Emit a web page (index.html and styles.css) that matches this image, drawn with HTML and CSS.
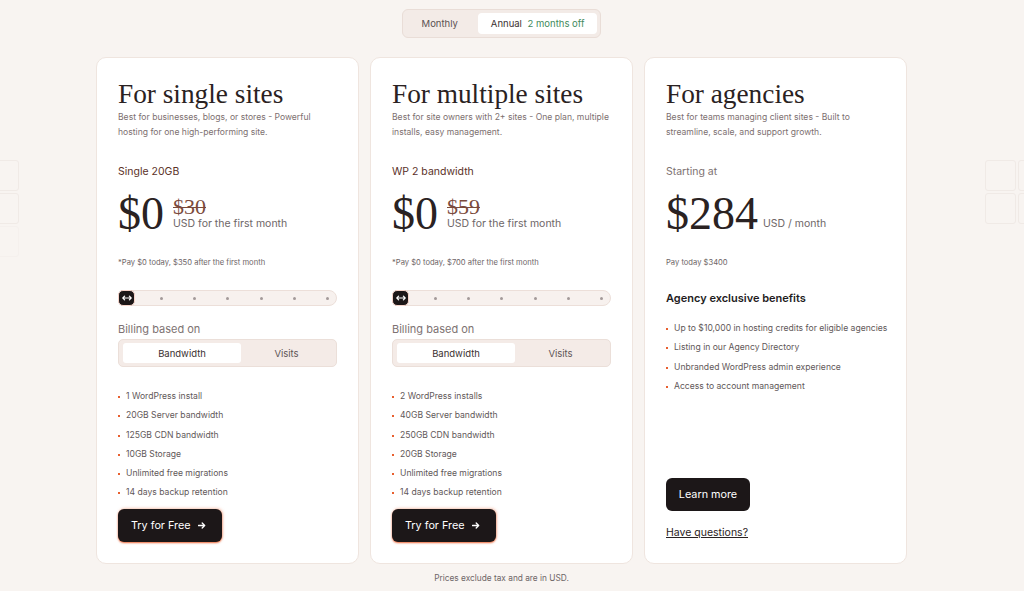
FILE: index.html
```html
<!DOCTYPE html>
<html lang="en">
<head>
    <meta charset="UTF-8">
    <meta name="viewport" content="width=device-width, initial-scale=1.0">
    <title>Pricing</title>
    <link rel="stylesheet" href="styles.css">
</head>
<body>
    <!-- faint background tiles -->
    <div class="tiles tiles-left">
        <span class="tile"></span>
        <span class="tile"></span>
        <span class="tile tile-fade"></span>
    </div>
    <div class="tiles tiles-right">
        <span class="tile"></span>
        <span class="tile"></span>
        <span class="tile"></span>
        <span class="tile"></span>
    </div>

    <main class="page">
        <div class="period-toggle">
            <button class="period">Monthly</button>
            <button class="period active">Annual <span class="save">2 months off</span></button>
        </div>

        <section class="plans">
            <!-- Single site -->
            <article class="card">
                <h2 class="card-title">For single sites</h2>
                <p class="card-desc">Best for businesses, blogs, or stores - Powerful hosting for one high-performing site.</p>
                <div class="plan-name">Single 20GB</div>
                <div class="price-row">
                    <span class="price">$0</span>
                    <div class="price-side">
                        <span class="old-price">$30</span>
                        <span class="price-unit">USD for the first month</span>
                    </div>
                </div>
                <p class="price-note">*Pay $0 today, $350 after the first month</p>
                <div class="slider">
                    <span class="thumb">
                        <svg width="10" height="6" viewBox="0 0 10 6"><path d="M1 3h8M2.6 1.2L0.8 3l1.8 1.8M7.4 1.2L9.2 3 7.4 4.8" fill="none" stroke="#fff" stroke-width="1.2" stroke-linecap="round" stroke-linejoin="round"/></svg>
                    </span>
                    <span class="dot"></span><span class="dot"></span><span class="dot"></span>
                    <span class="dot"></span><span class="dot"></span><span class="dot"></span>
                </div>
                <div class="billing-label">Billing based on</div>
                <div class="segment">
                    <span class="seg active">Bandwidth</span>
                    <span class="seg">Visits</span>
                </div>
                <ul class="features">
                    <li>1 WordPress install</li>
                    <li>20GB Server bandwidth</li>
                    <li>125GB CDN bandwidth</li>
                    <li>10GB Storage</li>
                    <li>Unlimited free migrations</li>
                    <li>14 days backup retention</li>
                </ul>
                <button class="btn btn-glow">Try for Free
                    <svg width="8" height="7" viewBox="0 0 8 7"><path d="M0.5 3.5h6.2M4.2 1l2.5 2.5L4.2 6" fill="none" stroke="#fff" stroke-width="1.3" stroke-linecap="round" stroke-linejoin="round"/></svg>
                </button>
            </article>

            <!-- Multiple sites -->
            <article class="card">
                <h2 class="card-title">For multiple sites</h2>
                <p class="card-desc">Best for site owners with 2+ sites - One plan, multiple installs, easy management.</p>
                <div class="plan-name">WP 2 bandwidth</div>
                <div class="price-row">
                    <span class="price">$0</span>
                    <div class="price-side">
                        <span class="old-price">$59</span>
                        <span class="price-unit">USD for the first month</span>
                    </div>
                </div>
                <p class="price-note">*Pay $0 today, $700 after the first month</p>
                <div class="slider">
                    <span class="thumb">
                        <svg width="10" height="6" viewBox="0 0 10 6"><path d="M1 3h8M2.6 1.2L0.8 3l1.8 1.8M7.4 1.2L9.2 3 7.4 4.8" fill="none" stroke="#fff" stroke-width="1.2" stroke-linecap="round" stroke-linejoin="round"/></svg>
                    </span>
                    <span class="dot"></span><span class="dot"></span><span class="dot"></span>
                    <span class="dot"></span><span class="dot"></span><span class="dot"></span>
                </div>
                <div class="billing-label">Billing based on</div>
                <div class="segment">
                    <span class="seg active">Bandwidth</span>
                    <span class="seg">Visits</span>
                </div>
                <ul class="features">
                    <li>2 WordPress installs</li>
                    <li>40GB Server bandwidth</li>
                    <li>250GB CDN bandwidth</li>
                    <li>20GB Storage</li>
                    <li>Unlimited free migrations</li>
                    <li>14 days backup retention</li>
                </ul>
                <button class="btn btn-glow">Try for Free
                    <svg width="8" height="7" viewBox="0 0 8 7"><path d="M0.5 3.5h6.2M4.2 1l2.5 2.5L4.2 6" fill="none" stroke="#fff" stroke-width="1.3" stroke-linecap="round" stroke-linejoin="round"/></svg>
                </button>
            </article>

            <!-- Agencies -->
            <article class="card">
                <h2 class="card-title">For agencies</h2>
                <p class="card-desc">Best for teams managing client sites - Built to streamline, scale, and support growth.</p>
                <div class="plan-name muted">Starting at</div>
                <div class="price-row">
                    <span class="price">$284</span>
                    <div class="price-side price-side-tight">
                        <span class="price-unit">USD / month</span>
                    </div>
                </div>
                <p class="price-note">Pay today $3400</p>
                <h3 class="benefits-title">Agency exclusive benefits</h3>
                <ul class="features benefits">
                    <li>Up to $10,000 in hosting credits for eligible agencies</li>
                    <li>Listing in our Agency Directory</li>
                    <li>Unbranded WordPress admin experience</li>
                    <li>Access to account management</li>
                </ul>
                <div class="agency-actions">
                    <button class="btn btn-learn">Learn more</button>
                    <a class="questions" href="#">Have questions?</a>
                </div>
            </article>
        </section>

        <p class="footnote">Prices exclude tax and are in USD.</p>
    </main>
</body>
</html>
```

FILE: styles.css
```css
* {
    box-sizing: border-box;
}

body {
    margin: 0;
    padding: 0;
    background-color: #f8f4f1;
    font-family: Inter, "Open Sans", sans-serif;
    color: #2a2222;
    overflow: hidden;
}

.tiles {
    position: absolute;
    top: 160px;
    display: grid;
    gap: 2px;
}

.tiles-left {
    left: -12px;
    grid-template-columns: 31px;
}

.tiles-right {
    left: 985px;
    grid-template-columns: 31px 31px;
}

.tile {
    display: block;
    height: 31px;
    border: 1px solid #f0eae6;
    border-radius: 3px;
}

.tile-fade {
    border-color: #f5f0ed;
}

.page {
    width: 1003px;
    padding-top: 9px;
    display: flex;
    flex-direction: column;
    align-items: center;
}

/* Monthly / Annual toggle */
.period-toggle {
    display: flex;
    gap: 2px;
    padding: 3px;
    background-color: #f3ebe7;
    border: 1px solid #e9ddd7;
    border-radius: 6px;
}

.period {
    height: 21px;
    padding: 0 13px;
    border: none;
    background: none;
    border-radius: 4px;
    font-family: Inter, sans-serif;
    font-size: 9.5px;
    color: #5a5152;
}

.period:first-child {
    padding: 0 18px 0 16px;
}

.period.active {
    background-color: #fff;
    color: #3a3030;
}

.save {
    margin-left: 3px;
    color: #3f8a5c;
}

/* Cards */
.plans {
    display: grid;
    grid-template-columns: repeat(3, 263px);
    gap: 11px;
    margin-top: 19px;
}

.card {
    display: flex;
    flex-direction: column;
    align-items: flex-start;
    padding: 22px 21px 21px 21px;
    background-color: #fff;
    border: 1px solid #efe5df;
    border-radius: 10px;
}

.card-title {
    margin: 0;
    font-family: "Liberation Serif", "DejaVu Serif", serif;
    font-weight: normal;
    font-size: 27.3px;
    line-height: 28px;
    color: #2a2222;
}

.card-desc {
    margin: 2px 0 0 0;
    font-size: 8.6px;
    line-height: 15px;
    color: #7d7070;
}

.plan-name {
    margin-top: 25px;
    font-size: 10.5px;
    line-height: 14px;
    color: #5b3128;
}

.plan-name.muted {
    color: #7d7272;
}

.price-row {
    display: flex;
    align-items: flex-end;
    margin-top: 12px;
    height: 46px;
}

.price {
    font-family: "Liberation Serif", "DejaVu Serif", serif;
    font-size: 46px;
    line-height: 46px;
    color: #2a2222;
}

.price-side {
    display: flex;
    flex-direction: column;
    margin-left: 9px;
    padding-bottom: 6px;
}

.price-side-tight {
    margin-left: 5px;
}

.old-price {
    font-family: "Liberation Serif", "DejaVu Serif", serif;
    font-size: 22px;
    line-height: 20px;
    color: #7a4a3c;
    text-decoration: line-through;
    text-decoration-thickness: 1px;
}

.price-unit {
    font-size: 10.5px;
    line-height: 14px;
    color: #6e6667;
}

.price-note {
    margin: 20px 0 0 0;
    font-size: 7.6px;
    line-height: 12px;
    color: #6e6667;
}

/* Slider */
.slider {
    position: relative;
    display: flex;
    align-items: center;
    justify-content: space-between;
    width: 100%;
    height: 16px;
    margin-top: 21px;
    padding: 0 7px 0 41px;
    background-color: #f7f1ee;
    border: 1px solid #ecdfd9;
    border-radius: 8px;
}

.thumb {
    position: absolute;
    left: -1px;
    top: -1px;
    width: 17px;
    height: 16px;
    display: flex;
    align-items: center;
    justify-content: center;
    background-color: #1c1718;
    border: 1.5px solid #f6d4ca;
    border-radius: 5px;
}

.dot {
    width: 3px;
    height: 3px;
    border-radius: 50%;
    background-color: #a39a99;
}

.billing-label {
    margin-top: 16px;
    font-size: 11px;
    line-height: 14px;
    color: #7d7272;
}

.segment {
    display: flex;
    width: 100%;
    margin-top: 3px;
    padding: 3px 4px;
    background-color: #f4ebe7;
    border: 1px solid #ebdfd9;
    border-radius: 5px;
}

.seg {
    flex: 1;
    height: 20px;
    display: flex;
    align-items: center;
    justify-content: center;
    font-size: 9.5px;
    color: #5e5556;
    border-radius: 3px;
}

.seg.active {
    flex: 0 0 118px;
    background-color: #fff;
    color: #3a3030;
}

/* Feature lists */
.features {
    list-style: none;
    margin: 20px 0 0 0;
    padding: 0;
}

.features li {
    position: relative;
    padding-left: 8px;
    font-size: 8.6px;
    line-height: 19.3px;
    color: #5f5859;
    white-space: nowrap;
}

.features li::before {
    content: "";
    position: absolute;
    left: 0;
    top: 9px;
    width: 2px;
    height: 2px;
    background-color: #e8602f;
}

.benefits-title {
    margin: 22px 0 0 0;
    font-size: 11px;
    line-height: 14px;
    font-weight: 600;
    color: #231c1d;
}

.benefits {
    margin-top: 14px;
}

/* Buttons */
.btn {
    display: inline-flex;
    align-items: center;
    gap: 8px;
    height: 33px;
    padding: 0 13px;
    border: none;
    border-radius: 6px;
    background-color: #1c1718;
    color: #fff;
    font-family: Inter, sans-serif;
    font-size: 10.8px;
    white-space: nowrap;
}

.btn-glow {
    margin-top: 6px;
    width: 104px;
    box-shadow: 0 1px 2px rgba(232, 90, 40, 0.9), 1px -1px 3px rgba(232, 120, 80, 0.35);
}

.agency-actions {
    margin-top: auto;
    display: flex;
    flex-direction: column;
    align-items: flex-start;
    padding-bottom: 2px;
}

.btn-learn {
    width: 84px;
    padding: 0;
    justify-content: center;
}

.questions {
    margin-top: 15px;
    font-size: 10.5px;
    line-height: 14px;
    color: #2a2222;
    text-decoration: underline;
}

.footnote {
    margin: 8px 0 0 0;
    font-size: 8.3px;
    line-height: 12px;
    color: #6e6667;
}
```
